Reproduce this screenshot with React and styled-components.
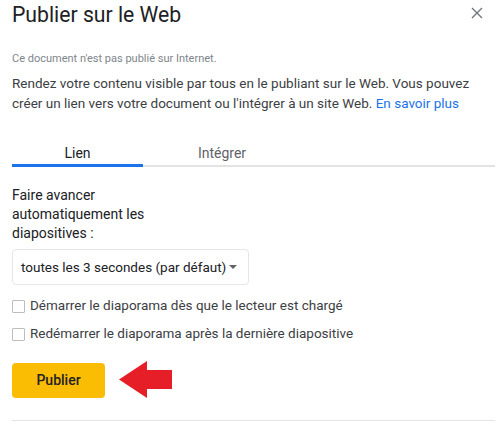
import React, { useState } from 'react';
import styled, { createGlobalStyle } from 'styled-components';

const GlobalStyle = createGlobalStyle`
  html, body { margin: 0; padding: 0; background: #ffffff; }
  body { font-family: Roboto, "Liberation Sans", Arial, sans-serif; color: #202124; }
`;

const Dialog = styled.div`
  width: 500px; height: 424px; box-sizing: border-box; padding: 0 5px 0 12px;
  display: flex; flex-direction: column; overflow: hidden;
`;

const Header = styled.div`
  display: flex; justify-content: space-between; align-items: flex-start; height: 30px;
`;

const Title = styled.h1`
  margin: 1px 0 0; font-size: 21.2px; font-weight: 400; line-height: 28px; color: #202124;
`;

const CloseButton = styled.button`
  border: 0; background: none; padding: 0; margin: 7px 12px 0 0; width: 12px; height: 12px;
  cursor: pointer; display: flex;
`;

const Notice = styled.p`
  margin: 22px 0 0; font-size: 11px; line-height: 14px; color: #80868b;
`;

const Intro = styled.p`
  margin: 7px 0 0; font-size: 13.5px; line-height: 20px; color: #3c4043; white-space: nowrap;
`;

const Link = styled.a`
  color: #1a73e8; text-decoration: none;
`;

const TabBar = styled.div`
  display: flex; margin-top: 26px; border-bottom: 2px solid #e3e3e3;
`;

const Tab = styled.button`
  width: ${(p) => p.w}px; border: 0; background: none; padding: 5px 0 2px; margin-bottom: -2px;
  font-family: inherit; font-size: 14px; line-height: 18px; cursor: pointer;
  color: ${(p) => (p.active ? '#202124' : '#5f6368')};
  border-bottom: 3px solid ${(p) => (p.active ? '#1a73e8' : 'transparent')};
`;

const Label = styled.div`
  margin-top: 19px; width: 140px; font-size: 14px; line-height: 19px; color: #202124;
`;

const Select = styled.div`
  margin-top: 6px; width: 237px; height: 36px; box-sizing: border-box;
  border: 1px solid #e6e6e6; border-radius: 4px; display: flex; align-items: center;
  justify-content: space-between; padding: 0 11px 0 8px; font-size: 13.5px; color: #202124;
  white-space: nowrap;
`;

const Caret = styled.span`
  width: 0; height: 0; border-left: 4px solid transparent; border-right: 4px solid transparent;
  border-top: 4px solid #5f6368;
`;

const CheckRow = styled.label`
  display: flex; align-items: center; gap: 5px; font-size: 13.5px; line-height: 18px; color: #3c4043;
  margin-top: ${(p) => p.top}px; cursor: pointer; white-space: nowrap;
`;

const Box = styled.span`
  width: 11px; height: 11px; border: 1px solid #bdbdbd; border-radius: 1px; background: #fff;
  flex: none; margin-top: 2px;
`;

const Actions = styled.div`
  display: flex; align-items: center; gap: 14px; margin-top: 19px;
`;

const PublishButton = styled.button`
  width: 93px; height: 35px; border: 0; border-radius: 4px; background: #fbbc04;
  font-family: inherit; font-size: 14px; font-weight: 500; color: #202124; cursor: pointer;
`;

const Footer = styled.div`
  margin-top: auto; margin-bottom: 3px; border-top: 1px solid #e3e3e3;
`;

function Checkbox({ top, children }) {
  return (
    <CheckRow top={top}>
      <Box />
      {children}
    </CheckRow>
  );
}

export default function App() {
  const [tab, setTab] = useState('lien');
  return (
    <>
      <GlobalStyle />
      <Dialog>
        <Header>
          <Title>Publier sur le Web</Title>
          <CloseButton aria-label="Fermer">
            <svg width="12" height="12" viewBox="0 0 12 12">
              <path d="M1 1L11 11M11 1L1 11" stroke="#70757a" strokeWidth="1.4" />
            </svg>
          </CloseButton>
        </Header>
        <Notice>Ce document n'est pas publié sur Internet.</Notice>
        <Intro>
          Rendez votre contenu visible par tous en le publiant sur le Web. Vous pouvez
          <br />
          créer un lien vers votre document ou l'intégrer à un site Web. <Link href="#">En savoir plus</Link>
        </Intro>
        <TabBar>
          <Tab w={131} active={tab === 'lien'} onClick={() => setTab('lien')}>Lien</Tab>
          <Tab w={158} active={tab === 'integrer'} onClick={() => setTab('integrer')}>Intégrer</Tab>
        </TabBar>
        <Label>Faire avancer automatiquement les diapositives :</Label>
        <Select>
          <span>toutes les 3 secondes (par défaut)</span>
          <Caret />
        </Select>
        <Checkbox top={11}>Démarrer le diaporama dès que le lecteur est chargé</Checkbox>
        <Checkbox top={10}>Redémarrer le diaporama après la dernière diapositive</Checkbox>
        <Actions>
          <PublishButton>Publier</PublishButton>
          <svg width="54" height="38" viewBox="0 0 54 38">
            <path d="M0 18.5L28 0V9H53V28H28V37Z" fill="#e61e28" />
          </svg>
        </Actions>
        <Footer />
      </Dialog>
    </>
  );
}
